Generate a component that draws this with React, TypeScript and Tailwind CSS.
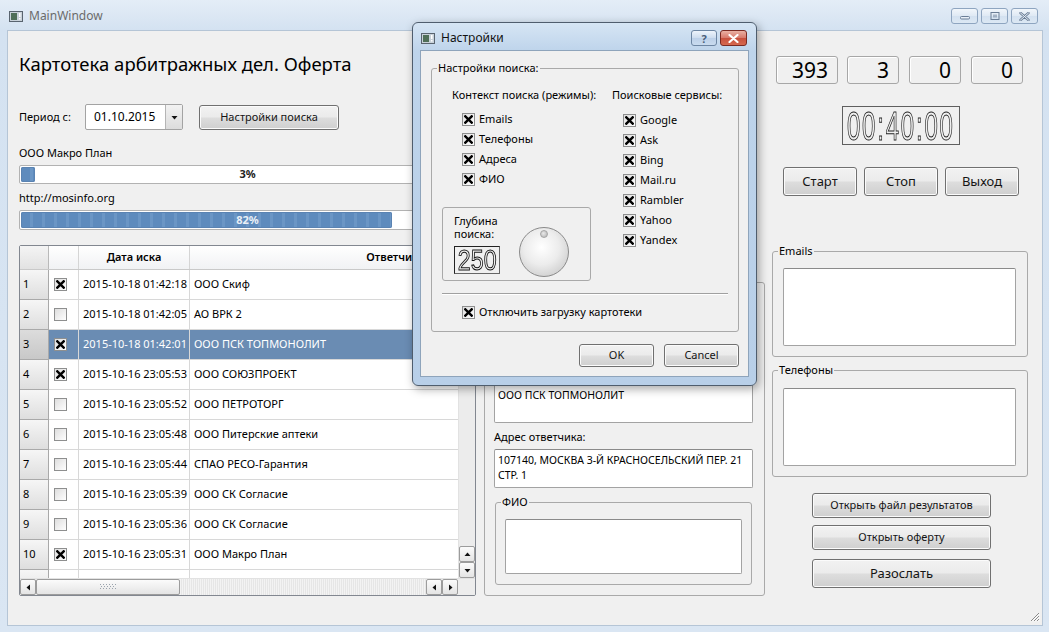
import React from 'react';

type Row = { on: boolean; date: string; name: string };

const rows: Row[] = [
  { on: true, date: '2015-10-18 01:42:18', name: 'ООО Скиф' },
  { on: false, date: '2015-10-18 01:42:05', name: 'АО ВРК 2' },
  { on: true, date: '2015-10-18 01:42:01', name: 'ООО ПСК ТОПМОНОЛИТ' },
  { on: true, date: '2015-10-16 23:05:53', name: 'ООО СОЮЗПРОЕКТ' },
  { on: false, date: '2015-10-16 23:05:52', name: 'ООО ПЕТРОТОРГ' },
  { on: false, date: '2015-10-16 23:05:48', name: 'ООО Питерские аптеки' },
  { on: false, date: '2015-10-16 23:05:44', name: 'СПАО РЕСО-Гарантия' },
  { on: false, date: '2015-10-16 23:05:39', name: 'ООО СК Согласие' },
  { on: false, date: '2015-10-16 23:05:36', name: 'ООО СК Согласие' },
  { on: true, date: '2015-10-16 23:05:31', name: 'ООО Макро План' },
  { on: false, date: '', name: '' },
];

const modes = ['Emails', 'Телефоны', 'Адреса', 'ФИО'];
const services = ['Google', 'Ask', 'Bing', 'Mail.ru', 'Rambler', 'Yahoo', 'Yandex'];

const Check: React.FC<{ on?: boolean }> = ({ on }) => (
  <span className="flex h-[13px] w-[13px] shrink-0 items-center justify-center border border-[#8e8f8f] bg-[linear-gradient(135deg,#dedede,#ffffff)]">
    {on && (
      <svg width="9" height="9" viewBox="0 0 9 9">
        <path d="M1.3 1.3L7.7 7.7M7.7 1.3L1.3 7.7" stroke="#000" strokeWidth="2.4" strokeLinecap="square" />
      </svg>
    )}
  </span>
);

const CheckRow: React.FC<{ label: string; className?: string }> = ({ label, className = '' }) => (
  <div className={`flex h-[20px] items-center gap-[4px] whitespace-nowrap ${className}`}>
    <Check on />
    <span>{label}</span>
  </div>
);

const Btn: React.FC<{ className?: string; children: React.ReactNode }> = ({ className = '', children }) => (
  <div
    className={`flex shrink-0 items-center justify-center rounded-[3px] border border-[#707070] bg-[linear-gradient(#f2f2f2,#ebebeb_48%,#dddddd_52%,#cfcfcf)] text-[#151515] shadow-[inset_0_0_0_1px_#fbfbfb] ${className}`}
  >
    {children}
  </div>
);

const Group: React.FC<{ title: string; className?: string; children?: React.ReactNode }> = ({
  title,
  className = '',
  children,
}) => (
  <fieldset className={`rounded-[3px] border border-[#a9a9a9] ${className}`}>
    <legend className="ml-[5px] px-[1px] leading-[16px]">{title}</legend>
    {children}
  </fieldset>
);

const TextBox: React.FC<{ className?: string; children?: React.ReactNode }> = ({ className = '', children }) => (
  <div className={`rounded-[2px] border border-[#a3a3a3] border-t-[#8a8a8a] bg-white ${className}`}>{children}</div>
);

const Tri: React.FC<{ dir: 'l' | 'r' | 'u' | 'd' }> = ({ dir }) => {
  const d = {
    l: 'M5 0.5L1.5 3.5L5 6.5Z',
    r: 'M2 0.5L5.5 3.5L2 6.5Z',
    u: 'M0.5 5L3.5 1.5L6.5 5Z',
    d: 'M0.5 2L3.5 5.5L6.5 2Z',
  }[dir];
  return (
    <svg width="7" height="7" viewBox="0 0 7 7">
      <path d={d} fill="#111" />
    </svg>
  );
};

const ArrowBtn: React.FC<{ dir: 'l' | 'r' | 'u' | 'd' }> = ({ dir }) => (
  <div className="flex h-[16px] w-[16px] shrink-0 items-center justify-center rounded-[2px] border border-[#9c9c9c] bg-[linear-gradient(#fbfbfb,#e4e4e4)]">
    <Tri dir={dir} />
  </div>
);

const Grip: React.FC = () => (
  <svg width="16" height="6" viewBox="0 0 16 6">
    {[0, 1, 2].map((r) =>
      [0, 1, 2, 3, 4, 5].map((c) => (
        <rect key={`${r}-${c}`} x={c * 3 + (r % 2)} y={r * 2} width="1" height="1" fill="#9aa3ad" />
      ))
    )}
  </svg>
);

const Progress: React.FC<{ pct: number; light?: boolean; className?: string }> = ({ pct, light, className = '' }) => (
  <div className={`relative rounded-[2px] border border-[#b2b2b2] bg-white p-[1px] ${className}`}>
    <div
      className="h-full rounded-[2px] bg-[repeating-linear-gradient(90deg,#5e8bbd_0px,#5e8bbd_9px,#6b96c5_9px,#6b96c5_12px)] shadow-[inset_0_0_0_1px_#5a83b2]"
      style={{ width: `${pct}%` }}
    />
    <span
      className={`absolute inset-0 flex items-center justify-center font-bold ${light ? 'text-[#e9eff6]' : 'text-[#222]'}`}
    >
      {pct}%
    </span>
  </div>
);

const WinIcon: React.FC = () => (
  <svg width="14" height="11" viewBox="0 0 14 11">
    <rect x="0.5" y="0.5" width="13" height="10" fill="#c9d2da" stroke="#59646f" />
    <rect x="2" y="2" width="6" height="7" fill="#4f6f58" />
    <rect x="10" y="2" width="1.5" height="4" fill="#fff" />
    <rect x="10" y="7" width="1.5" height="1.5" fill="#fff" />
  </svg>
);

const Table: React.FC = () => (
  <div className="mt-[15px] flex h-[351px] w-[457px] flex-col overflow-hidden rounded-[2px] border border-[#828790] bg-white">
    <div className="flex min-h-0 flex-1">
      <div className="min-w-0 flex-1 overflow-hidden">
        <div className="w-[576px]">
          <div className="flex h-[24px] border-b border-[#c9c9c9] bg-[linear-gradient(#ffffff,#f1f2f4)]">
            <div className="w-[29px] shrink-0 border-r border-[#b9b9b9] bg-[linear-gradient(#f4f4f4,#e2e2e2)]" />
            <div className="w-[30px] shrink-0 border-r border-[#d5d5d5]" />
            <div className="flex w-[111px] shrink-0 items-center justify-center border-r border-[#d5d5d5] font-semibold">
              Дата иска
            </div>
            <div className="flex w-[406px] shrink-0 items-center justify-center border-r border-[#d5d5d5] font-semibold">
              Ответчик
            </div>
          </div>
          {rows.map((r, i) => {
            const sel = i === 2;
            const cell = sel ? 'bg-[#6a8cb3] text-white' : '';
            return (
              <div key={i} className="flex h-[30px]">
                <div
                  className={`flex w-[29px] shrink-0 items-center border-b border-r border-[#a9a9a9] pl-[3px] ${
                    sel ? 'bg-[linear-gradient(#dcdcdc,#c8c8c8)]' : 'bg-[linear-gradient(#f6f6f6,#dedede)]'
                  }`}
                >
                  {r.date ? i + 1 : ''}
                </div>
                <div className={`flex w-[30px] shrink-0 items-center border-b border-r border-[#d8d8d8] pl-[5px] ${cell}`}>
                  <Check on={r.on} />
                </div>
                <div className={`flex w-[111px] shrink-0 items-center border-b border-r border-[#d8d8d8] pl-[4px] ${cell}`}>
                  {r.date}
                </div>
                <div className={`flex w-[406px] shrink-0 items-center border-b border-r border-[#d8d8d8] pl-[4px] ${cell}`}>
                  {r.name}
                </div>
              </div>
            );
          })}
        </div>
      </div>
      <div className="flex w-[17px] shrink-0 flex-col border-l border-[#e2e2e2] bg-[#ececec]">
        <ArrowBtn dir="u" />
        <div className="h-[24px] rounded-[2px] border border-[#9c9c9c] bg-[linear-gradient(90deg,#f7f7f7,#e3e3e3)]" />
        <div className="flex-1" />
        <ArrowBtn dir="u" />
        <ArrowBtn dir="d" />
      </div>
    </div>
    <div className="flex h-[17px] shrink-0 items-center border-t border-[#e2e2e2] bg-[#ededed]">
      <ArrowBtn dir="l" />
      <div className="flex h-[16px] w-[144px] shrink-0 items-center justify-center rounded-[2px] border border-[#9c9c9c] bg-[linear-gradient(#fbfbfb,#e4e4e4)]">
        <Grip />
      </div>
      <div className="h-full flex-1 bg-[repeating-linear-gradient(90deg,#f3f3f3_0px,#f3f3f3_1px,#e6e6e6_1px,#e6e6e6_2px)]" />
      <ArrowBtn dir="l" />
      <ArrowBtn dir="r" />
      <div className="w-[17px] shrink-0 bg-[#f0f0f0]" />
    </div>
  </div>
);

const LeftColumn: React.FC = () => (
  <div className="ml-[11px] flex w-[457px] shrink-0 flex-col">
    <h1 className="mt-[19px] whitespace-nowrap text-[18.5px] leading-[28px]">Картотека арбитражных дел. Оферта</h1>
    <div className="mt-[26px] flex h-[26px] items-center">
      <span className="w-[66px] shrink-0">Период с:</span>
      <div className="flex h-[26px] w-[98px] shrink-0 rounded-[2px] border border-[#a3a3a3] bg-white">
        <span className="flex flex-1 items-center pl-[8px] text-[12px]">01.10.2015</span>
        <div className="flex w-[17px] items-center justify-center border-l border-[#b5b5b5] bg-[linear-gradient(#f2f2f2,#dcdcdc)]">
          <Tri dir="d" />
        </div>
      </div>
      <Btn className="ml-[16px] h-[25px] w-[140px]">Настройки поиска</Btn>
    </div>
    <div className="mt-[15px] leading-[16px]">ООО Макро План</div>
    <Progress pct={3} className="mt-[4px] h-[19px]" />
    <div className="mt-[6px] leading-[16px]">http://mosinfo.org</div>
    <Progress pct={82} light className="mt-[4px] h-[20px]" />
    <Table />
  </div>
);

const MiddleColumn: React.FC = () => (
  <div className="ml-[8px] mt-[251px] h-[314px] w-[281px] shrink-0 rounded-[3px] border border-[#a9a9a9] px-[9px] pt-[9px]">
    {/* upper fields sit under the settings dialog */}
    <div className="h-[16px]" />
    <TextBox className="mt-[2px] h-[39px] w-[259px]" />
    <div className="mt-[15px] h-[16px]" />
    <TextBox className="mt-[4px] h-[39px] w-[259px] px-[3px] pt-[3px] text-[10.5px]">ООО ПСК ТОПМОНОЛИТ</TextBox>
    <div className="mt-[6px] leading-[16px]">Адрес ответчика:</div>
    <TextBox className="mt-[4px] h-[39px] w-[259px] px-[3px] pt-[3px] text-[10.5px] leading-[15px]">
      <div className="whitespace-nowrap">107140, МОСКВА 3-Й КРАСНОСЕЛЬСКИЙ ПЕР. 21</div>
      <div className="whitespace-nowrap">СТР. 1</div>
    </TextBox>
    <Group title="ФИО" className="ml-[1px] mt-[6px] h-[91px] w-[257px]">
      <TextBox className="ml-[9px] mt-[9px] h-[55px] w-[237px]" />
    </Group>
  </div>
);

const Counter: React.FC<{ value: string; className?: string }> = ({ value, className = '' }) => (
  <div
    className={`flex h-[28px] shrink-0 items-center justify-end rounded-[3px] border border-[#a7a7a7] pr-[9px] text-[21px] leading-none shadow-[inset_1px_1px_0_#ffffff] ${className}`}
  >
    {value}
  </div>
);

const RightColumn: React.FC = () => (
  <div className="ml-[7px] flex w-[256px] shrink-0 flex-col">
    <div className="mt-[25px] flex">
      <Counter value="393" className="ml-[4px] w-[62px]" />
      <Counter value="3" className="ml-[9px] w-[52px]" />
      <Counter value="0" className="ml-[10px] w-[52px]" />
      <Counter value="0" className="ml-[10px] w-[52px]" />
    </div>
    <div className="ml-[70px] mt-[22px] flex h-[39px] w-[118px] items-center justify-center border border-[#5f5f5f]">
      <span className="inline-block scale-x-[0.6] whitespace-nowrap font-['Liberation_Sans',sans-serif] text-[40px] leading-none tracking-[3px] text-transparent grayscale [-webkit-text-stroke:1px_#222]">
        00:40:00
      </span>
    </div>
    <div className="ml-[11px] mt-[22px] flex gap-[7px] text-[13px]">
      <Btn className="h-[29px] w-[74px]">Старт</Btn>
      <Btn className="h-[29px] w-[74px]">Стоп</Btn>
      <Btn className="h-[29px] w-[74px]">Выход</Btn>
    </div>
    <Group title="Emails" className="mt-[47px] h-[114px] w-[256px]">
      <TextBox className="ml-[10px] mt-[9px] h-[78px] w-[233px]" />
    </Group>
    <Group title="Телефоны" className="mt-[5px] h-[115px] w-[256px]">
      <TextBox className="ml-[10px] mt-[10px] h-[78px] w-[233px]" />
    </Group>
    <Btn className="ml-[40px] mt-[16px] h-[25px] w-[179px]">Открыть файл результатов</Btn>
    <Btn className="ml-[40px] mt-[7px] h-[25px] w-[179px]">Открыть оферту</Btn>
    <Btn className="ml-[40px] mt-[9px] h-[29px] w-[179px] text-[13px]">Разослать</Btn>
  </div>
);

const SettingsDialog: React.FC = () => (
  <div className="absolute left-[412px] top-[22px] h-[364px] w-[345px] rounded-[6px] border border-[#4f5d6d] bg-[linear-gradient(#d6e5f4,#bed4eb_28px,#b8cfe8)] px-[7px] shadow-[2px_3px_10px_rgba(0,0,0,0.35)]">
    <div className="flex h-[27px] items-start">
      <div className="ml-[1px] mt-[8px] flex items-center">
        <WinIcon />
        <span className="ml-[6px] text-[12px] leading-[14px] text-[#111]">Настройки</span>
      </div>
      <div className="ml-auto mr-[2px] mt-[7px] flex gap-[3px]">
        <div className="flex h-[16px] w-[26px] items-center justify-center rounded-[3px] border border-[#6d86a3] bg-[linear-gradient(#eef4fb,#cddcee_50%,#bcd0e8_50%,#c9dbef)] text-[11px] font-bold leading-none text-[#4a5e78]">
          ?
        </div>
        <div className="flex h-[16px] w-[27px] items-center justify-center rounded-[3px] border border-[#7a2a22] bg-[linear-gradient(#eab1a4,#d7786a_50%,#c7503d_50%,#d6684f)]">
          <svg width="11" height="9" viewBox="0 0 11 9">
            <path d="M1.5 1L9.5 8M9.5 1L1.5 8" stroke="#fff" strokeWidth="2.2" strokeLinecap="round" />
          </svg>
        </div>
      </div>
    </div>
    <div className="flex h-[327px] flex-col border border-[#8ea4bb] bg-[#f0f0f0]">
      <Group title="Настройки поиска:" className="ml-[10px] mt-[9px] h-[272px] w-[308px]">
        <div className="flex">
          <div className="ml-[10px] w-[149px] shrink-0">
            <div className="mt-[11px] whitespace-nowrap pl-[10px] leading-[16px]">Контекст поиска (режимы):</div>
            <div className="mt-[6px] pl-[20px]">
              {modes.map((m) => (
                <CheckRow key={m} label={m} />
              ))}
            </div>
            <div className="mt-[18px] flex h-[74px] w-[149px] items-start rounded-[3px] border border-[#a9a9a9] pl-[11px]">
              <div className="mt-[6px] flex w-[46px] shrink-0 flex-col">
                <span className="leading-[13px]">Глубина</span>
                <span className="leading-[13px]">поиска:</span>
                <div className="mt-[6px] flex h-[28px] w-[46px] items-center justify-center border border-[#222] border-b-[#666] border-r-[#666]">
                  <span className="inline-block scale-x-[0.8] whitespace-nowrap font-['Liberation_Sans',sans-serif] text-[29px] leading-none text-transparent grayscale [-webkit-text-stroke:1px_#111]">
                    250
                  </span>
                </div>
              </div>
              <div className="relative ml-[19px] mt-[19px] h-[50px] w-[50px] shrink-0 rounded-full border border-[#8a8a8a] bg-[radial-gradient(circle_at_45%_40%,#ffffff,#ececec_45%,#cfcfcf_80%,#b9b9b9)]">
                <div className="absolute left-[20px] top-[2px] h-[8px] w-[8px] rounded-full border border-[#a5a5a5] bg-[radial-gradient(circle_at_40%_40%,#e8e8e8,#b0b0b0)]" />
              </div>
            </div>
          </div>
          <div className="ml-[21px] shrink-0">
            <div className="mt-[11px] whitespace-nowrap leading-[16px]">Поисковые сервисы:</div>
            <div className="mt-[7px] pl-[11px]">
              {services.map((s) => (
                <CheckRow key={s} label={s} />
              ))}
            </div>
          </div>
        </div>
        <div className="ml-[10px] mt-[12px] h-[2px] w-[286px] border-b border-t border-b-white border-t-[#a0a0a0]" />
        <CheckRow label="Отключить загрузку картотеки" className="ml-[30px] mt-[7px]" />
      </Group>
      <div className="mt-[12px] flex justify-end gap-[10px] pr-[9px]">
        <Btn className="h-[23px] w-[75px]">OK</Btn>
        <Btn className="h-[23px] w-[75px]">Cancel</Btn>
      </div>
    </div>
  </div>
);

const CaptionBtn: React.FC<{ children: React.ReactNode }> = ({ children }) => (
  <div className="flex h-[16px] w-[27px] items-center justify-center rounded-[3px] border border-[#8ea5c0] bg-[linear-gradient(#f1f6fb,#dfe9f4_50%,#d3e1f0_50%,#dce8f4)]">
    {children}
  </div>
);

export default function App() {
  return (
    <div className="relative h-[632px] w-[1049px] overflow-hidden bg-[linear-gradient(#e4edf7,#d4e2f1_30px,#dae6f3)] font-['Noto_Sans',sans-serif] text-[11px] text-black">
      <div className="flex h-[30px] items-start">
        <div className="ml-[9px] mt-[9px] flex items-center">
          <WinIcon />
          <span className="ml-[6px] text-[12px] leading-[14px] text-[#6b6b6b]">MainWindow</span>
        </div>
        <div className="ml-auto mr-[11px] mt-[8px] flex gap-[3px]">
          <CaptionBtn>
            <svg width="10" height="8" viewBox="0 0 10 8">
              <rect x="0.5" y="4.5" width="9" height="2.5" rx="1" fill="#e9f0f8" stroke="#6b7e96" />
            </svg>
          </CaptionBtn>
          <CaptionBtn>
            <svg width="10" height="8" viewBox="0 0 10 8">
              <rect x="1" y="0.5" width="8" height="7" fill="none" stroke="#6b7e96" />
              <rect x="3" y="2.5" width="4" height="3" fill="#6b7e96" opacity="0.5" />
            </svg>
          </CaptionBtn>
          <CaptionBtn>
            <svg width="11" height="9" viewBox="0 0 11 9">
              <path d="M1.5 1L9.5 8M9.5 1L1.5 8" stroke="#6b7e96" strokeWidth="2.4" strokeLinecap="round" />
              <path d="M1.5 1L9.5 8M9.5 1L1.5 8" stroke="#e9f0f8" strokeWidth="1" strokeLinecap="round" />
            </svg>
          </CaptionBtn>
        </div>
      </div>
      <div className="ml-[7px] flex h-[596px] w-[1036px] items-start border border-[#b5c5d6] bg-[#f0f0f0]">
        <LeftColumn />
        <MiddleColumn />
        <RightColumn />
      </div>
      <svg className="absolute bottom-[10px] right-[9px]" width="11" height="11" viewBox="0 0 11 11">
        <path d="M10 2L2 10M10 5L5 10M10 8L8 10" stroke="#8a8a8a" strokeWidth="1" />
        <path d="M10.5 3L3 10.5M10.5 6L6 10.5M10.5 9L9 10.5" stroke="#ffffff" strokeWidth="1" />
      </svg>
      <SettingsDialog />
    </div>
  );
}
